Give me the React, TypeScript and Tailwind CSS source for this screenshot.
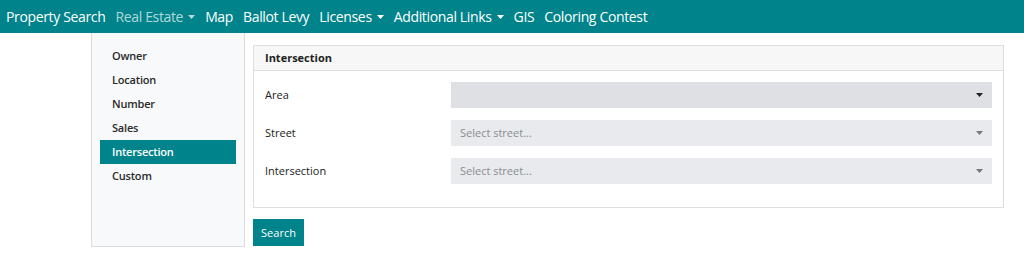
const NAV_LINKS = [
  { label: "Property Search", dropdown: false, muted: false },
  { label: "Real Estate", dropdown: true, muted: true },
  { label: "Map", dropdown: false, muted: false },
  { label: "Ballot Levy", dropdown: false, muted: false },
  { label: "Licenses", dropdown: true, muted: false },
  { label: "Additional Links", dropdown: true, muted: false },
  { label: "GIS", dropdown: false, muted: false },
  { label: "Coloring Contest", dropdown: false, muted: false },
];

const SEARCH_TYPES = ["Owner", "Location", "Number", "Sales", "Intersection", "Custom"];

function Caret({ className }: { className?: string }) {
  return (
    <svg width="7" height="4" viewBox="0 0 7 4" className={className}>
      <path d="M0 0h7L3.5 4z" fill="currentColor" />
    </svg>
  );
}

function SelectBox({ placeholder, dark }: { placeholder?: string; dark?: boolean }) {
  return (
    <div
      className={`flex-1 h-[26px] flex items-center justify-between pl-[9px] pr-[9px] ${
        dark ? "bg-[#dee0e4]" : "bg-[#e8eaed]"
      }`}
    >
      <span className="text-[11px] text-[#8a8d91]">{placeholder}</span>
      <Caret className={dark ? "text-[#222]" : "text-[#777]"} />
    </div>
  );
}

export default function App() {
  return (
    <div className="w-[1024px] h-[257px] bg-white font-['Open_Sans',sans-serif] overflow-hidden">
      {/* Top navigation */}
      <nav className="h-[33px] bg-[#00838a] flex items-center pl-[6px] gap-[10px]">
        {NAV_LINKS.map((link) => (
          <span
            key={link.label}
            className={`flex items-center gap-[5px] text-[14px] tracking-[-0.35px] ${
              link.muted ? "text-white/70" : "text-white"
            }`}
          >
            {link.label}
            {link.dropdown && <Caret />}
          </span>
        ))}
      </nav>

      <div className="flex pl-[91px] gap-[8px]">
        {/* Search type list */}
        <aside className="w-[154px] h-[214px] bg-[#f8f9fb] border-x border-b border-[#dcdcdc] pt-[11px] px-[8px]">
          {SEARCH_TYPES.map((item) => (
            <div
              key={item}
              className={`h-[24px] flex items-center pl-[12px] text-[11px] font-semibold tracking-[-0.2px] ${
                item === "Intersection" ? "bg-[#00838a] text-white" : "text-[#2a2a2a]"
              }`}
            >
              {item}
            </div>
          ))}
        </aside>

        <div className="flex-1 pr-[20px] pt-[12px]">
          {/* Intersection panel */}
          <section className="border border-[#dedede]">
            <header className="h-[25px] bg-[#f7f7f7] border-b border-[#dedede] flex items-center pl-[11px] text-[11px] font-bold text-[#222]">
              Intersection
            </header>
            <div className="pl-[11px] pr-[11px] pt-[11px] pb-[23px] flex flex-col gap-[12px]">
              <div className="flex items-center">
                <span className="w-[186px] text-[11px] text-[#222]">Area</span>
                <SelectBox dark />
              </div>
              <div className="flex items-center">
                <span className="w-[186px] text-[11px] text-[#222]">Street</span>
                <SelectBox placeholder="Select street..." />
              </div>
              <div className="flex items-center">
                <span className="w-[186px] text-[11px] text-[#222]">Intersection</span>
                <SelectBox placeholder="Select street..." />
              </div>
            </div>
          </section>

          <button className="mt-[11px] h-[27px] w-[51px] bg-[#00838a] text-white text-[11px] pt-[1px]">
            Search
          </button>
        </div>
      </div>
    </div>
  );
}
